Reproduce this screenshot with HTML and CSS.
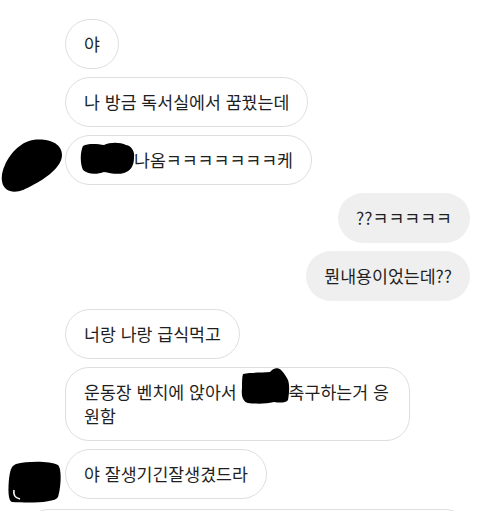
FILE: index.html
```html
<!DOCTYPE html>
<html lang="ko">
<head>
<meta charset="utf-8">
<title>DM</title>
<link rel="stylesheet" href="styles.css">
</head>
<body>
<main class="thread">
  <div class="row in"><div class="avatar"></div><div class="bubble">야</div></div>
  <div class="row in"><div class="avatar"></div><div class="bubble">나 방금 독서실에서 꿈꿨는데</div></div>
  <div class="row in">
    <div class="avatar">
      <svg class="scribble" width="65" height="50" viewBox="0 0 65 50"><path d="M33 5 C48 3 62 8 62 20 C62 32 45 44 33 50 C24 55 14 60 6 54 C0 49 1 38 5 30 C9 20 20 7 33 5 Z" fill="#000"/></svg>
    </div>
    <div class="bubble"><span class="redact r1"><svg width="50" height="24" viewBox="0 0 50 24"><path d="M-1 -2 C4 -5 14 -4 20 -3 C26 -6 36 -6 42 -3 C48 -2 51 4 50 10 C50 17 47 23 40 25 C33 27 26 25 20 24 C12 27 3 26 -1 22 C-4 16 -4 4 -1 -2 Z" fill="#000"/></svg></span>나옴ㅋㅋㅋㅋㅋㅋㅋ케</div>
  </div>
  <div class="row out"><div class="bubble">??ㅋㅋㅋㅋㅋ</div></div>
  <div class="row out"><div class="bubble">뭔내용이었는데??</div></div>
  <div class="row in"><div class="avatar"></div><div class="bubble">너랑 나랑 급식먹고</div></div>
  <div class="row in"><div class="avatar"></div><div class="bubble wide">운동장 벤치에 앉아서 <span class="redact r2"><svg width="47" height="24" viewBox="0 0 47 24"><path d="M1 -6 C10 -8 20 -7 28 -8 C31 -12 36 -13 39 -10 C42 -7 44 -4 46 0 C48 6 47 14 46 20 C44 23 38 23 32 22 C24 24 14 24 6 23 C1 22 -1 16 0 8 C0 2 0 -3 1 -6 Z" fill="#000"/></svg></span>축구하는거 응<br>원함</div></div>
  <div class="row in">
    <div class="avatar">
      <svg class="scribble" width="65" height="50" viewBox="0 0 65 50"><path d="M16 15 C28 12 50 12 58 16 C62 20 61 38 58 48 C55 54 30 54 12 53 C8 52 8 40 9 30 C10 22 11 17 16 15 Z" fill="#000"/><path d="M14 41 C13 46 15 49 20 50" fill="none" stroke="#fff" stroke-width="1.6"/></svg>
    </div>
    <div class="bubble">야 잘생기긴잘생겼드라</div>
  </div>
  <div class="row next"><div class="bubble full">&nbsp;</div></div>
</main>
</body>
</html>
```

FILE: styles.css
```css
html, body {
  margin: 0;
  padding: 0;
  background: #fff;
  overflow: hidden;
}
body {
  font-family: "Noto Sans CJK KR", "Noto Sans", sans-serif;
  font-size: 17.3px;
  color: #1f1f1f;
}
.thread {
  display: flex;
  flex-direction: column;
  gap: 8px;
  padding: 19px 10px 0 0;
}
.row {
  display: flex;
  align-items: flex-start;
}
.row.out {
  justify-content: flex-end;
}
.avatar {
  flex: 0 0 65px;
  width: 65px;
  height: 50px;
}
.scribble {
  display: block;
  overflow: visible;
}
.bubble {
  line-height: 24px;
  padding: 12px 18px;
  border: 1px solid #dedede;
  border-radius: 26px;
  white-space: nowrap;
}
.bubble.wide {
  padding-right: 20px;
  border-radius: 24px;
}
.out .bubble {
  border: none;
  padding: 13px 18px;
  background: #efefef;
}
.redact {
  display: inline-block;
  vertical-align: top;
  height: 24px;
}
.redact svg {
  display: block;
  overflow: visible;
}
.row.next {
  padding-top: 2px;
  padding-left: 24px;
}
.bubble.full {
  flex: 1;
}
```
